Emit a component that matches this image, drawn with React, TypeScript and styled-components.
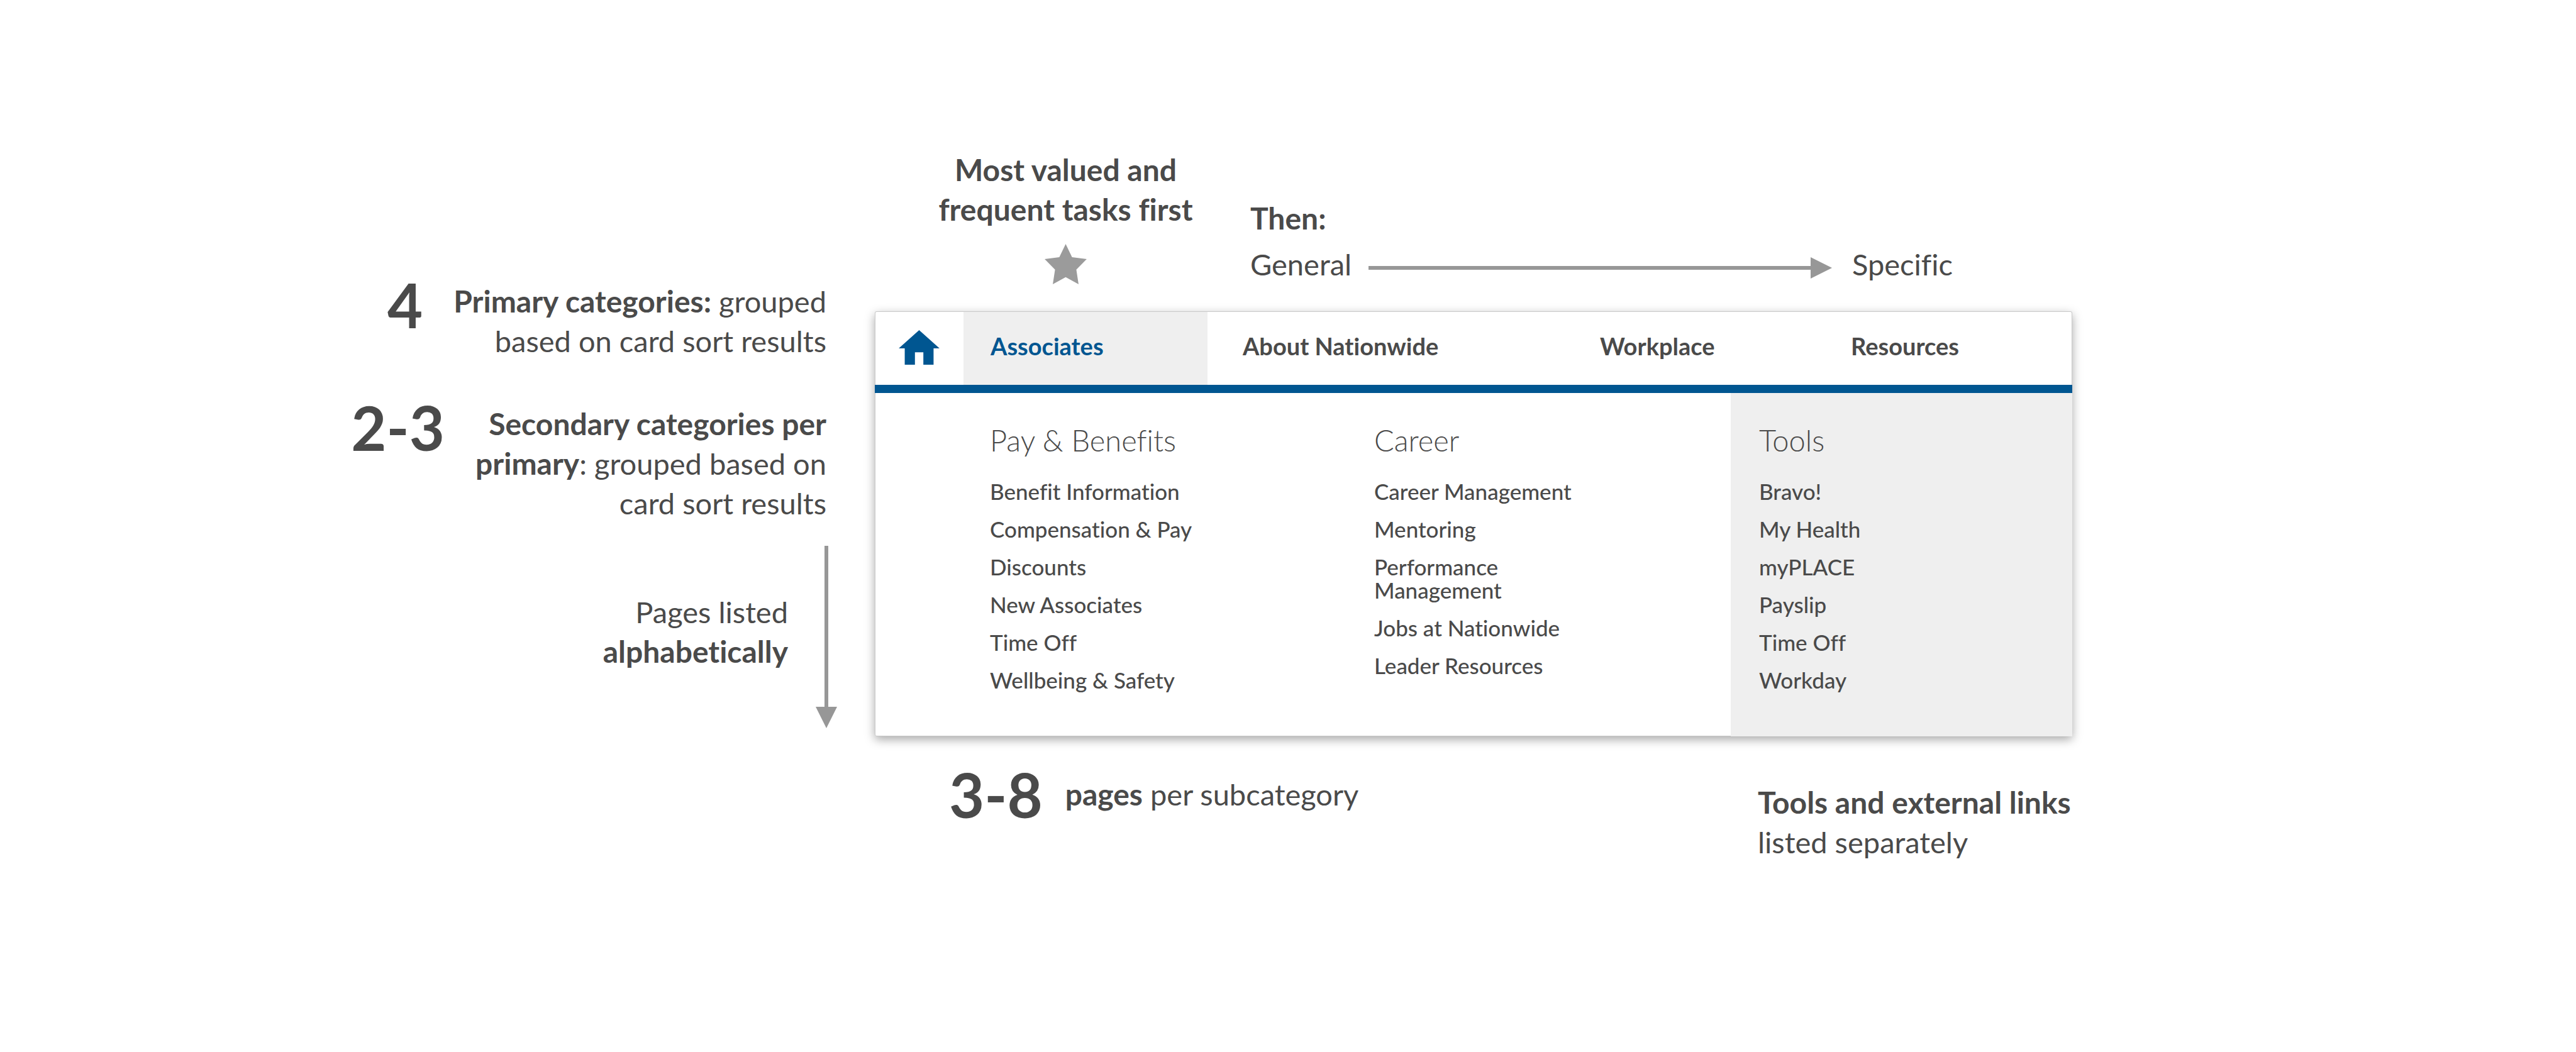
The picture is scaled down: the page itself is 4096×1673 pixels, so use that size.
import React from 'react';
import styled, { createGlobalStyle } from 'styled-components';

const color = {
  text: '#4a4a4a',
  blue: '#005691',
  shade: '#efefef',
  line: '#979797',
  star: '#9b9b9b',
  edge: '#c8c8c8',
};

const GlobalStyle = createGlobalStyle`
  *, *::before, *::after { box-sizing: border-box; }
  body {
    margin: 0;
    background: #ffffff;
    color: ${color.text};
    font-family: Lato, "Liberation Sans", sans-serif;
    font-variant-ligatures: none;
  }
`;

const Page = styled.main`
  display: grid;
  grid-template-columns: minmax(0, 1391fr) minmax(0, 1904fr) minmax(0, 801fr);
  align-items: start;
  padding: 239px 0;
`;

const SideNotes = styled.aside`
  display: flex;
  flex-direction: column;
  align-items: flex-end;
  padding: 209px 60px 0 0;
`;

const NumberedNote = styled.div<{ $centered?: boolean }>`
  display: flex;
  align-items: ${(p) => (p.$centered ? 'center' : 'flex-start')};
  gap: ${(p) => (p.$centered ? 36 : 49)}px;
`;

const SideNote = styled(NumberedNote)`
  padding-right: 17px;
  margin-bottom: 69px;
  &:last-of-type { margin-bottom: 36px; }
`;

const BigNumber = styled.span`
  font-size: 97px;
  font-weight: 700;
  line-height: 73px;
  white-space: nowrap;
`;

const Note = styled.p<{ $align?: 'left' | 'right' | 'center' }>`
  margin: 0;
  font-size: 47px;
  line-height: 63px;
  text-align: ${(p) => p.$align ?? 'left'};
  white-space: nowrap;
  strong { font-size: 48px; font-weight: 700; line-height: 1; }
`;

const OrderNote = styled.section`
  display: flex;
  align-items: flex-start;
  gap: 44px;
  height: 290px;
  ${Note} { padding-top: 74px; }
`;

const Arrow = styled.div<{ $down?: boolean }>`
  display: flex;
  flex-direction: ${(p) => (p.$down ? 'column' : 'row')};
  align-items: center;
  align-self: ${(p) => (p.$down ? 'stretch' : 'center')};
  flex: ${(p) => (p.$down ? 'none' : '1')};
  padding-top: ${(p) => (p.$down ? 0 : 11)}px;
`;

const Shaft = styled.span<{ $down?: boolean }>`
  flex: 1;
  width: ${(p) => (p.$down ? '6px' : 'auto')};
  height: ${(p) => (p.$down ? 'auto' : '6px')};
  background: ${color.line};
`;

const Head = styled.svg`
  display: block;
  flex: none;
  fill: ${color.line};
`;

const Main = styled.div`
  display: flex;
  flex-direction: column;
`;

const TopNotes = styled.header`
  display: grid;
  grid-template-columns: minmax(0, 597fr) minmax(0, 1307fr);
  align-items: start;
  padding-bottom: 43px;
`;

const FirstNote = styled.div`
  display: flex;
  flex-direction: column;
  align-items: center;
  gap: 23px;
  padding-left: 10px;
`;

const Star = styled.svg`
  display: block;
  width: 67px;
  height: 64px;
  fill: ${color.star};
`;

const ThenNote = styled.div`
  display: flex;
  flex-direction: column;
  gap: 10px;
  padding: 77px 190px 0 0;
`;

const Scale = styled.div`
  display: flex;
  align-items: center;
  ${Arrow} { margin: 0 32px 0 27px; }
`;

const Card = styled.section`
  background: #ffffff;
  border-radius: 3px;
  box-shadow: inset 0 0 0 1px ${color.edge}, 0 5px 16px rgba(0, 0, 0, 0.35);
`;

const NavBar = styled.nav`
  display: grid;
  grid-template-columns: 141fr 388fr 568fr 399fr 408fr;
  height: 130px;
  padding-top: 1px;
  border-bottom: 13px solid ${color.blue};
`;

const HomeLink = styled.a`
  display: flex;
  align-items: center;
  justify-content: center;
  padding-bottom: 4px;
`;

const HomeIcon = styled.svg`
  display: block;
  width: 65px;
  height: 55px;
  fill: ${color.blue};
`;

const NavLink = styled.a<{ $active?: boolean }>`
  display: flex;
  align-items: center;
  padding: 0 0 8px ${(p) => (p.$active ? 43 : 56)}px;
  background: ${(p) => (p.$active ? color.shade : 'transparent')};
  color: ${(p) => (p.$active ? color.blue : color.text)};
  font-size: 38px;
  font-weight: 700;
  text-decoration: none;
  white-space: nowrap;
`;

const Panel = styled.div`
  display: grid;
  grid-template-columns: minmax(0, 794fr) minmax(0, 567fr) minmax(0, 543fr);
`;

const Group = styled.section<{ $indent: number; $shaded?: boolean }>`
  padding: 47px 0 71px ${(p) => p.$indent}px;
  background: ${(p) => (p.$shaded ? color.shade : 'transparent')};
`;

const GroupTitle = styled.h2`
  margin: 0 0 35px;
  font-size: 47px;
  font-weight: 300;
  line-height: 56px;
`;

const LinkList = styled.ul`
  display: flex;
  flex-direction: column;
  gap: 23px;
  max-width: 360px;
  margin: 0;
  padding: 0;
  list-style: none;
  font-size: 35px;
  font-weight: 500;
  line-height: 37px;
`;

const PageLink = styled.a`
  display: block;
  color: inherit;
  text-decoration: none;
`;

const BottomNotes = styled.footer`
  display: grid;
  grid-template-columns: minmax(0, 1404fr) minmax(0, 500fr);
  align-items: start;
  padding-top: 56px;
`;

const PagesNote = styled(NumberedNote)`
  padding-left: 118px;
`;

const ToolsNote = styled(Note)`
  padding-top: 18px;
`;

const tabs = ['Associates', 'About Nationwide', 'Workplace', 'Resources'];

const groups = [
  {
    title: 'Pay & Benefits',
    indent: 183,
    links: ['Benefit Information', 'Compensation & Pay', 'Discounts', 'New Associates', 'Time Off', 'Wellbeing & Safety'],
  },
  {
    title: 'Career',
    indent: 0,
    links: ['Career Management', 'Mentoring', 'Performance Management', 'Jobs at Nationwide', 'Leader Resources'],
  },
  {
    title: 'Tools',
    indent: 45,
    shaded: true,
    links: ['Bravo!', 'My Health', 'myPLACE', 'Payslip', 'Time Off', 'Workday'],
  },
];

export default function App() {
  return (
    <>
      <GlobalStyle />
      <Page>
        <SideNotes>
          <SideNote>
            <BigNumber>4</BigNumber>
            <Note $align="right">
              <strong>Primary categories:</strong> grouped
              <br />
              based on card sort results
            </Note>
          </SideNote>
          <SideNote>
            <BigNumber>2-3</BigNumber>
            <Note $align="right">
              <strong>Secondary categories per</strong>
              <br />
              <strong>primary</strong>: grouped based on
              <br />
              card sort results
            </Note>
          </SideNote>
          <OrderNote>
            <Note $align="right">
              Pages listed
              <br />
              <strong>alphabetically</strong>
            </Note>
            <Arrow $down>
              <Shaft $down />
              <Head width="34" height="34" viewBox="0 0 34 34" aria-hidden="true">
                <path d="M0 0H34L17 34Z" />
              </Head>
            </Arrow>
          </OrderNote>
        </SideNotes>

        <Main>
          <TopNotes>
            <FirstNote>
              <Note $align="center">
                <strong>Most valued and</strong>
                <br />
                <strong>frequent tasks first</strong>
              </Note>
              <Star viewBox="0 0 94 90" aria-hidden="true">
                <path d="M47 0L61.2 29.5L94 33.7L70.8 57.4L75.8 90L47 74.2L18.2 90L23.2 57.4L0 33.7L32.8 29.5Z" />
              </Star>
            </FirstNote>
            <ThenNote>
              <Note>
                <strong>Then:</strong>
              </Note>
              <Scale>
                <Note>General</Note>
                <Arrow>
                  <Shaft />
                  <Head width="34" height="34" viewBox="0 0 34 34" aria-hidden="true">
                    <path d="M0 0V34L34 17Z" />
                  </Head>
                </Arrow>
                <Note>Specific</Note>
              </Scale>
            </ThenNote>
          </TopNotes>

          <Card>
            <NavBar>
              <HomeLink href="#home" aria-label="Home">
                <HomeIcon viewBox="0 0 92 78" aria-hidden="true">
                  <path d="M46 0L92 41H78.5V78H55.5V50H36.5V78H13.5V41H0Z" />
                </HomeIcon>
              </HomeLink>
              {tabs.map((tab, i) => (
                <NavLink key={tab} href="#tab" $active={i === 0}>
                  {tab}
                </NavLink>
              ))}
            </NavBar>
            <Panel>
              {groups.map((group) => (
                <Group key={group.title} $indent={group.indent} $shaded={group.shaded}>
                  <GroupTitle>{group.title}</GroupTitle>
                  <LinkList>
                    {group.links.map((link) => (
                      <li key={link}>
                        <PageLink href="#page">{link}</PageLink>
                      </li>
                    ))}
                  </LinkList>
                </Group>
              ))}
            </Panel>
          </Card>

          <BottomNotes>
            <PagesNote $centered>
              <BigNumber>3-8</BigNumber>
              <Note>
                <strong>pages</strong> per subcategory
              </Note>
            </PagesNote>
            <ToolsNote>
              <strong>Tools and external links</strong>
              <br />
              listed separately
            </ToolsNote>
          </BottomNotes>
        </Main>
      </Page>
    </>
  );
}
